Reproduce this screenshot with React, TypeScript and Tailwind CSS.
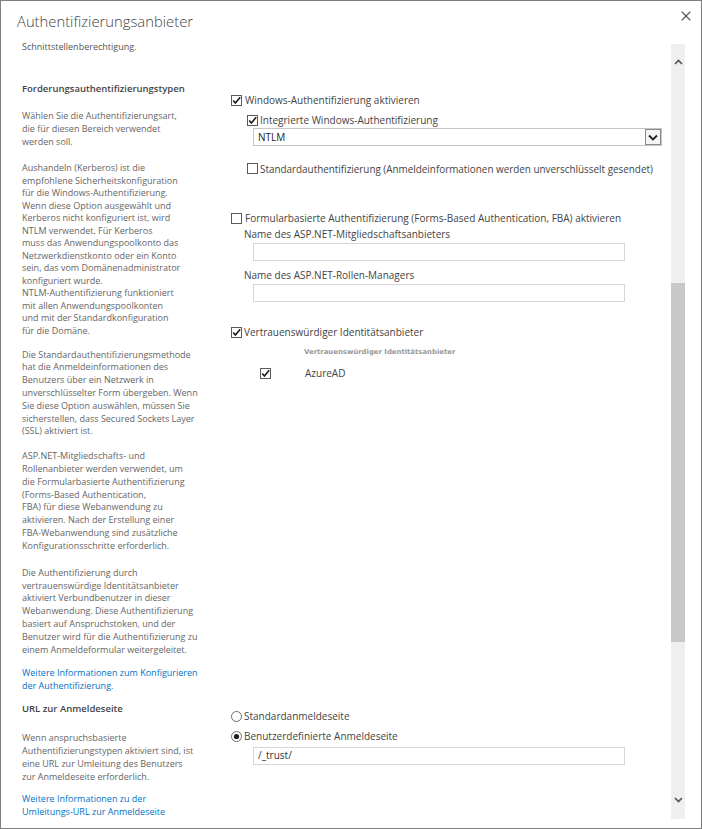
import React from 'react';
import { X } from 'lucide-react';

const p1 = ['Wählen Sie die Authentifizierungsart,', 'die für diesen Bereich verwendet', 'werden soll.'];
const p2 = [
  'Aushandeln (Kerberos) ist die',
  'empfohlene Sicherheitskonfiguration',
  'für die Windows-Authentifizierung.',
  'Wenn diese Option ausgewählt und',
  'Kerberos nicht konfiguriert ist, wird',
  'NTLM verwendet. Für Kerberos',
  'muss das Anwendungspoolkonto das',
  'Netzwerkdienstkonto oder ein Konto',
  'sein, das vom Domänenadministrator',
  'konfiguriert wurde.',
  'NTLM-Authentifizierung funktioniert',
  'mit allen Anwendungspoolkonten',
  'und mit der Standardkonfiguration',
  'für die Domäne.',
];
const p3 = [
  'Die Standardauthentifizierungsmethode',
  'hat die Anmeldeinformationen des',
  'Benutzers über ein Netzwerk in',
  'unverschlüsselter Form übergeben. Wenn',
  'Sie diese Option auswählen, müssen Sie',
  'sicherstellen, dass Secured Sockets Layer',
  '(SSL) aktiviert ist.',
];
const p4 = [
  'ASP.NET-Mitgliedschafts- und',
  'Rollenanbieter werden verwendet, um',
  'die Formularbasierte Authentifizierung',
  '(Forms-Based Authentication,',
  'FBA) für diese Webanwendung zu',
  'aktivieren. Nach der Erstellung einer',
  'FBA-Webanwendung sind zusätzliche',
  'Konfigurationsschritte erforderlich.',
];
const p5 = [
  'Die Authentifizierung durch',
  'vertrauenswürdige Identitätsanbieter',
  'aktiviert Verbundbenutzer in dieser',
  'Webanwendung. Diese Authentifizierung',
  'basiert auf Anspruchstoken, und der',
  'Benutzer wird für die Authentifizierung zu',
  'einem Anmeldeformular weitergeleitet.',
];
const link1 = ['Weitere Informationen zum Konfigurieren', 'der Authentifizierung.'];
const p6 = [
  'Wenn anspruchsbasierte',
  'Authentifizierungstypen aktiviert sind, ist',
  'eine URL zur Umleitung des Benutzers',
  'zur Anmeldeseite erforderlich.',
];
const link2 = ['Weitere Informationen zu der', 'Umleitungs-URL zur Anmeldeseite'];

const Lines = ({ lines, className }: { lines: string[]; className: string }) => (
  <div className={`whitespace-nowrap ${className}`}>
    {lines.map((l, i) => (
      <div key={i}>{l}</div>
    ))}
  </div>
);

const Box = ({ checked }: { checked?: boolean }) => (
  <svg width="11" height="11" viewBox="0 0 11 11" className="shrink-0">
    <rect x="0.5" y="0.5" width="10" height="10" fill="#fff" stroke="#5a5a5a" />
    {checked && <path d="M2.2 5.4 L4.4 8 L9.2 2.2" fill="none" stroke="#1c1c1c" strokeWidth="1.6" />}
  </svg>
);

const Radio = ({ checked }: { checked?: boolean }) => (
  <svg width="11" height="11" viewBox="0 0 11 11" className="shrink-0">
    <circle cx="5.5" cy="5.5" r="5" fill="#fff" stroke="#6e6e6e" />
    {checked && <circle cx="5.5" cy="5.5" r="2.6" fill="#1c1c1c" />}
  </svg>
);

const Chevron = ({ up }: { up?: boolean }) => (
  <svg width="9" height="6" viewBox="0 0 9 6">
    <path d={up ? 'M1 5 L4.5 1.5 L8 5' : 'M1 1 L4.5 4.5 L8 1'} fill="none" stroke="#555" strokeWidth="1.7" />
  </svg>
);

const Field = ({ value, className }: { value?: string; className: string }) => (
  <div className={`h-[18px] w-[372px] border border-[#d6d6d6] bg-white flex items-center pl-[4px] text-[10px] text-[#333] ${className}`}>
    {value}
  </div>
);

const desc = 'text-[9px] leading-[12.8px] text-[#666]';

export default function App() {
  return (
    <div className="w-[702px] h-[829px] border border-[#7f7f7f] bg-white flex flex-col overflow-hidden font-['Open_Sans',sans-serif]">
      {/* Header */}
      <div className="h-[39px] flex justify-between shrink-0">
        <div className="pl-[16px] pt-[10px] text-[14.8px] leading-[20px] font-light text-[#444]">
          Authentifizierungsanbieter
        </div>
        <div className="pr-[7px] pt-[7px]">
          <X size={16} strokeWidth={1.6} color="#555" />
        </div>
      </div>

      {/* Body */}
      <div className="flex flex-1 min-h-0">
        <div className="flex-1 overflow-hidden">
          <div className="pl-[21px] text-[9px] leading-[13px] text-[#555]">Schnittstellenberechtigung.</div>

          {/* Section: claims authentication types */}
          <div className="flex mt-[29.6px]">
            <div className="w-[230px] shrink-0 pl-[21px]">
              <div className="text-[9.5px] leading-[12.8px] font-semibold text-[#444] whitespace-nowrap">
                Forderungsauthentifizierungstypen
              </div>
              <Lines lines={p1} className={`${desc} mt-[14.7px]`} />
              <Lines lines={p2} className={`text-[9px] leading-[12.5px] text-[#666] mt-[13.6px]`} />
              <Lines lines={p3} className={`${desc} mt-[11.5px]`} />
              <Lines lines={p4} className={`${desc} mt-[12.1px]`} />
              <Lines lines={p5} className={`${desc} mt-[14.2px]`} />
              <Lines lines={link1} className="text-[9px] leading-[12.8px] text-[#0072c6] mt-[10.4px]" />
            </div>

            <div className="flex-1 flex flex-col pt-[10.4px] text-[10px] text-[#444] whitespace-nowrap">
              <div className="flex items-center h-[16px] gap-[3px]">
                <Box checked />
                <span>Windows-Authentifizierung aktivieren</span>
              </div>
              <div className="flex items-center h-[16px] gap-[2px] ml-[16px] mt-[3.5px]">
                <Box checked />
                <span>Integrierte Windows-Authentifizierung</span>
              </div>
              <div className="ml-[22px] w-[409px] h-[18px] border border-[#c6c6c6] flex items-center justify-between">
                <span className="pl-[4px] text-[#222]">NTLM</span>
                <div className="w-[16px] h-[16px] border border-[#8a8a8a] bg-[#f4f4f4] flex items-center justify-center">
                  <svg width="10" height="7" viewBox="0 0 10 7">
                    <path d="M1 1.5 L5 5.5 L9 1.5" fill="none" stroke="#222" strokeWidth="1.8" />
                  </svg>
                </div>
              </div>
              <div className="flex items-center h-[16px] gap-[2px] ml-[16px] mt-[14.5px]">
                <Box />
                <span className="text-[9.9px]">Standardauthentifizierung (Anmeldeinformationen werden unverschlüsselt gesendet)</span>
              </div>

              <div className="flex items-center h-[14px] gap-[3px] mt-[35px]">
                <Box />
                <span>Formularbasierte Authentifizierung (Forms-Based Authentication, FBA) aktivieren</span>
              </div>
              <div className="h-[14px] leading-[14px] ml-[13px] mt-[1px]">Name des ASP.NET-Mitgliedschaftsanbieters</div>
              <Field className="ml-[22px] mt-[2px]" />
              <div className="h-[14px] leading-[14px] ml-[13px] mt-[7px]">Name des ASP.NET-Rollen-Managers</div>
              <Field className="ml-[22px] mt-[2px]" />

              <div className="flex items-center h-[16px] gap-[2px] mt-[23px]">
                <Box checked />
                <span>Vertrauenswürdiger Identitätsanbieter</span>
              </div>
              <div className="h-[10px] leading-[10px] ml-[73px] mt-[6px] text-[6.9px] font-bold text-[#999] font-['DejaVu_Sans',sans-serif]">
                Vertrauenswürdiger Identitätsanbieter
              </div>
              <div className="flex items-center h-[16px] ml-[29px] mt-[9px]">
                <Box checked />
                <span className="ml-[34px]">AzureAD</span>
              </div>
            </div>
          </div>

          {/* Section: sign-in page URL */}
          <div className="flex mt-[10.8px]">
            <div className="w-[230px] shrink-0 pl-[21px]">
              <div className="text-[9.5px] leading-[12.8px] font-semibold text-[#444] whitespace-nowrap">
                URL zur Anmeldeseite
              </div>
              <Lines lines={p6} className={`${desc} mt-[16.5px]`} />
              <Lines lines={link2} className="text-[9px] leading-[12.8px] text-[#0072c6] mt-[9.5px]" />
            </div>
            <div className="flex-1 flex flex-col pt-[6.7px] text-[10px] text-[#444] whitespace-nowrap">
              <div className="flex items-center h-[14px] gap-[2px]">
                <Radio />
                <span>Standardanmeldeseite</span>
              </div>
              <div className="flex items-center h-[14px] gap-[2px] mt-[5.5px]">
                <Radio checked />
                <span>Benutzerdefinierte Anmeldeseite</span>
              </div>
              <Field value="/_trust/" className="ml-[22px] mt-[3.5px] border-[#c6c6c6]" />
            </div>
          </div>
        </div>

        {/* Scrollbar */}
        <div className="w-[14px] shrink-0 mt-[4px] mb-[9px] mr-[16px] bg-[#efefef] flex flex-col">
          <div className="h-[36px] flex items-center justify-center">
            <Chevron up />
          </div>
          <div className="h-[203px]" />
          <div className="h-[359px] bg-[#c8c8c8]" />
          <div className="flex-1" />
          <div className="h-[38px] flex items-center justify-center">
            <Chevron />
          </div>
        </div>
      </div>
    </div>
  );
}
